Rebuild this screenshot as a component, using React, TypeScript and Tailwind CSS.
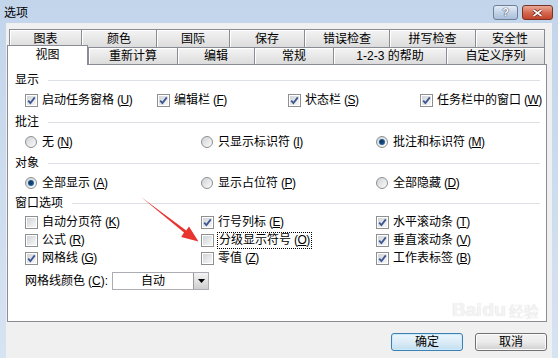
import React from 'react';

const row1 = [
  { t: '图表', w: 72 },
  { t: '颜色', w: 75 },
  { t: '国际', w: 73 },
  { t: '保存', w: 75 },
  { t: '错误检查', w: 85 },
  { t: '拼写检查', w: 86 },
  { t: '安全性', w: 70 },
];

const row2 = [
  { t: '重新计算', w: 89 },
  { t: '编辑', w: 77 },
  { t: '常规', w: 79 },
  { t: '1-2-3 的帮助', w: 113 },
  { t: '自定义序列', w: 99 },
];

function Acc({ text, k }: { text: string; k: string }) {
  return (
    <span className="whitespace-nowrap">
      {text}
      <span className="ml-[3px] tracking-[-0.5px]">
        (<u>{k}</u>)
      </span>
    </span>
  );
}

function Check({ on, text, k, focus }: { on?: boolean; text: string; k: string; focus?: boolean }) {
  return (
    <div className="flex items-center gap-[4px]">
      <span className="w-[13px] h-[13px] border border-[#8e8f8f] bg-white p-[1px] shrink-0">
        <span className="w-full h-full flex items-center justify-center bg-gradient-to-br from-[#d0d4d9] to-[#f7f7f7]">
          {on && (
            <svg width="9" height="9" viewBox="0 0 9 9">
              <path d="M1.2 4.6 L3.4 7 L7.8 1.4" fill="none" stroke="#3d5591" strokeWidth="1.8" />
            </svg>
          )}
        </span>
      </span>
      <span className={focus ? 'outline outline-1 outline-dotted outline-black px-[1px] leading-[15px]' : ''}>
        <Acc text={text} k={k} />
      </span>
    </div>
  );
}

function Radio({ on, text, k }: { on?: boolean; text: string; k: string }) {
  return (
    <div className="flex items-center gap-[5px]">
      <span className="w-[12px] h-[12px] rounded-full border border-[#8e8f8f] bg-gradient-to-br from-[#cfd3d8] to-[#fbfbfb] flex items-center justify-center shrink-0">
        {on && <span className="w-[6px] h-[6px] rounded-full bg-[radial-gradient(circle_at_45%_45%,#0f3f6e_30%,#3c87c4_100%)]" />}
      </span>
      <Acc text={text} k={k} />
    </div>
  );
}

function Header({ text, mt }: { text: string; mt: string }) {
  return (
    <div className={`flex items-center gap-[9px] h-[20px] ${mt}`}>
      <span>{text}</span>
      <span className="flex-1 h-px bg-[#dcdfe3]" />
    </div>
  );
}

export default function App() {
  return (
    <div className="relative w-[558px] h-[358px] overflow-hidden bg-gradient-to-b from-[#c3d5eb] to-[#d6e3f1] text-[12px] leading-none text-black font-['Liberation_Sans','Noto_Sans_CJK_SC',sans-serif]">
      {/* title bar */}
      <div className="h-[23px] flex items-start justify-between pl-[4px] pr-[5px]">
        <span className="mt-[7px]">选项</span>
        <div className="flex gap-[4px] mt-[5px]">
          <div className="w-[25px] h-[15px] rounded-[3px] border border-[#6f7f95] bg-gradient-to-b from-[#e4ecf6] via-[#c4d4e8] to-[#a9bfdb] flex items-center justify-center text-white font-bold text-[11px] [text-shadow:0_0_1px_#2b3a55,0_0_1px_#2b3a55]">
            ?
          </div>
          <div className="w-[31px] h-[15px] rounded-[3px] border border-[#7a3224] bg-gradient-to-b from-[#e8a999] via-[#d66a52] to-[#c2432a] flex items-center justify-center">
            <svg width="11" height="8" viewBox="0 0 11 8">
              <path d="M1.5 1 L9.5 7 M9.5 1 L1.5 7" stroke="#5a1a10" strokeWidth="3" />
              <path d="M1.5 1 L9.5 7 M9.5 1 L1.5 7" stroke="#fff" strokeWidth="1.6" />
            </svg>
          </div>
        </div>
      </div>

      {/* body */}
      <div className="h-[335px] px-[6px]">
        <div className="h-full bg-[#f0f0f0] pl-[1px] pt-[6px] flex flex-col">
          {/* tabs row 1 */}
          <div className="flex h-[18px] ml-[2px]">
            {row1.map((t, i) => (
              <div
                key={t.t}
                style={{ width: t.w }}
                className={`h-full border-t border-l border-[#898c95] ${i === row1.length - 1 ? 'border-r' : ''} bg-gradient-to-b from-[#f4f4f4] to-[#dcdcdc] shadow-[inset_1px_1px_0_#fff] flex items-center justify-center`}
              >
                {t.t}
              </div>
            ))}
          </div>
          {/* tabs row 2 */}
          <div className="flex items-end h-[17px]">
            <div className="relative z-10 w-[81px] h-[20px] mb-[-1px] border border-b-0 border-[#898c95] bg-white flex items-center justify-center pb-[1px]">
              视图
            </div>
            {row2.map((t, i) => (
              <div
                key={t.t}
                style={{ width: t.w }}
                className={`h-full border-t border-l border-[#898c95] ${i === row2.length - 1 ? 'border-r' : ''} bg-gradient-to-b from-[#f4f4f4] to-[#dcdcdc] shadow-[inset_1px_1px_0_#fff] flex items-center justify-center`}
              >
                {t.t}
              </div>
            ))}
          </div>

          {/* panel */}
          <div className="w-[540px] h-[258px] border border-[#898c95] bg-white pl-[7px] pr-[6px] pt-[5px] flex flex-col">
            <Header text="显示" mt="" />
            <div className="grid grid-cols-[132px_131px_132px_1fr] items-center h-[20px] pl-[10px]">
              <Check on text="启动任务窗格" k="U" />
              <Check on text="编辑栏" k="F" />
              <Check on text="状态栏" k="S" />
              <Check on text="任务栏中的窗口" k="W" />
            </div>

            <Header text="批注" mt="mt-[2px]" />
            <div className="grid grid-cols-[176px_175px_1fr] items-center h-[20px] pl-[10px]">
              <Radio text="无" k="N" />
              <Radio text="只显示标识符" k="I" />
              <Radio on text="批注和标识符" k="M" />
            </div>

            <Header text="对象" mt="mt-[1px]" />
            <div className="grid grid-cols-[176px_175px_1fr] items-center h-[20px] pl-[10px]">
              <Radio on text="全部显示" k="A" />
              <Radio text="显示占位符" k="P" />
              <Radio text="全部隐藏" k="D" />
            </div>

            <Header text="窗口选项" mt="" />
            <div className="grid grid-cols-[176px_175px_1fr] grid-rows-[18px_18px_18px] items-center pl-[10px]">
              <Check text="自动分页符" k="K" />
              <Check on text="行号列标" k="E" />
              <Check on text="水平滚动条" k="T" />
              <Check text="公式" k="R" />
              <Check text="分级显示符号" k="O" focus />
              <Check on text="垂直滚动条" k="V" />
              <Check on text="网格线" k="G" />
              <Check text="零值" k="Z" />
              <Check on text="工作表标签" k="B" />
            </div>

            <div className="flex items-center h-[18px] mt-[5px] pl-[10px]">
              <span className="w-[87px]">
                网格线颜色<span className="ml-[3px]">(<u>C</u>):</span>
              </span>
              <div className="flex w-[97px] h-[18px] border border-[#abadb3] bg-white">
                <span className="flex-1 flex items-center justify-center">自动</span>
                <span className="w-[15px] h-full border-l border-[#9a9a9a] bg-gradient-to-b from-[#f4f4f4] to-[#cfcfcf] flex items-center justify-center">
                  <svg width="7" height="4" viewBox="0 0 7 4">
                    <path d="M0 0 H7 L3.5 4 Z" fill="#000" />
                  </svg>
                </span>
              </div>
            </div>
          </div>

          {/* buttons */}
          <div className="flex justify-end gap-[12px] mt-[11px] pr-[5px]">
            <button className="w-[72px] h-[18px] rounded-[3px] border border-[#3c7fb1] bg-gradient-to-b from-[#eaf6fd] via-[#dcecf7] to-[#c2dff1] shadow-[inset_0_0_0_1px_#cdeafd] flex items-center justify-center">
              确定
            </button>
            <button className="w-[72px] h-[18px] rounded-[3px] border border-[#707070] bg-gradient-to-b from-[#f2f2f2] via-[#ebebeb] to-[#cfcfcf] shadow-[inset_0_0_0_1px_#fcfcfc] flex items-center justify-center">
              取消
            </button>
          </div>
        </div>
      </div>

      {/* watermark */}
      <div className="absolute left-[452px] top-[300px] flex items-end gap-[1px] text-[#f4f4f4] pointer-events-none [text-shadow:0_0_1px_#d2d2d2]">
        <span className="text-[19px] font-bold leading-none">Bai</span>
        <span className="text-[19px] font-bold leading-none">du</span>
        <span className="text-[15px] leading-none ml-[2px]">经验</span>
      </div>

      {/* red arrow */}
      <svg className="absolute inset-0 pointer-events-none" width="558" height="358" viewBox="0 0 558 358">
        <polygon
          points="141,197 186.2,230.6 189,226.4 198.5,241.5 181.2,237 184,232.6"
          fill="#e8352f"
        />
      </svg>
    </div>
  );
}
